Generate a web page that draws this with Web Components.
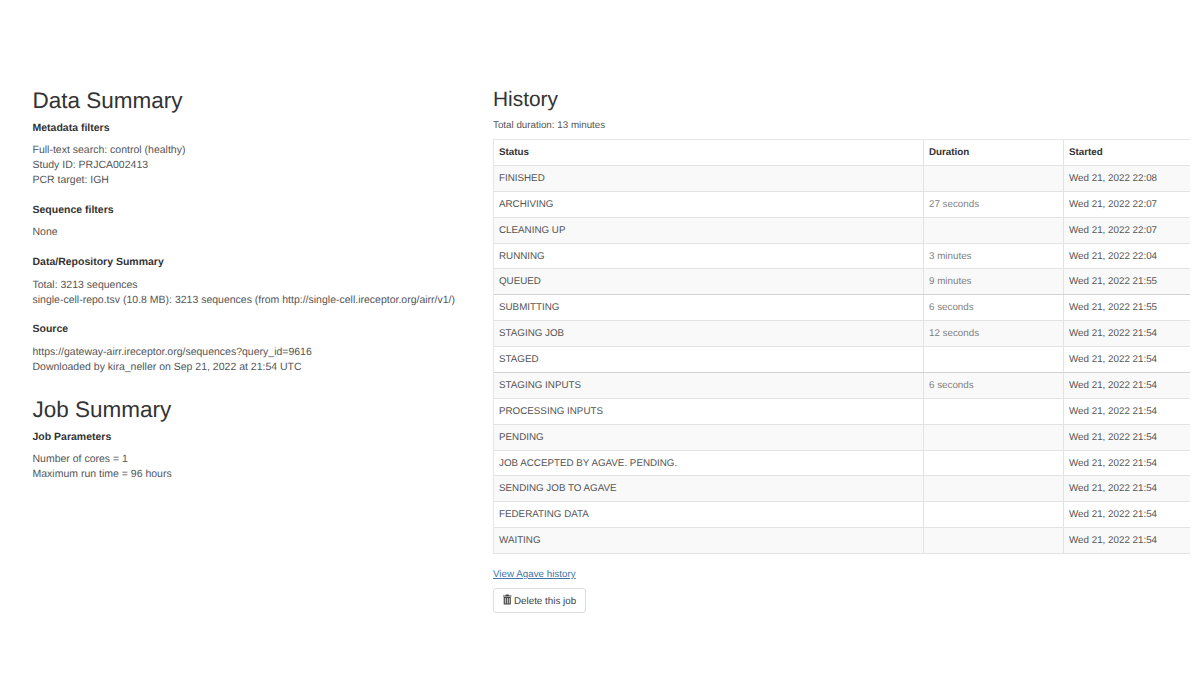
<!DOCTYPE html>
<html>
<head>
<meta charset="utf-8">
<title>Job</title>
<style>
  html, body { margin: 0; background: #fff; overflow: hidden; }
  body { font: 10.5px/15px "Liberation Sans", Arial, sans-serif; color: #555; text-rendering: geometricPrecision; }
</style>
</head>
<body>
<job-page>
  <div slot="left">
    <page-title>Data Summary</page-title>
    <summary-block heading="Metadata filters">Full-text search: control (healthy)<br>Study ID: PRJCA002413<br>PCR target: IGH</summary-block>
    <summary-block heading="Sequence filters">None</summary-block>
    <summary-block class="loose" heading="Data/Repository Summary">Total: 3213 sequences<br>single-cell-repo.tsv (10.8 MB): 3213 sequences (from http://single-cell.ireceptor.org/airr/v1/)</summary-block>
    <summary-block class="loose" heading="Source">https://gateway-airr.ireceptor.org/sequences?query_id=9616<br>Downloaded by kira_neller on Sep 21, 2022 at 21:54 UTC</summary-block>
    <page-title class="second">Job Summary</page-title>
    <summary-block heading="Job Parameters">Number of cores = 1<br>Maximum run time = 96 hours</summary-block>
  </div>
  <div slot="right">
    <page-title class="history">History</page-title>
    <history-table total="Total duration: 13 minutes"></history-table>
    <job-actions></job-actions>
  </div>
</job-page>

<script>
class JobPage extends HTMLElement {
  constructor() {
    super();
    this.attachShadow({mode: "open"}).innerHTML = `
      <style>
        :host { display: grid; grid-template-columns: 460.5px 697px; width: 1200px; height: 675px; box-sizing: border-box; padding: 87px 0 0 32.5px; overflow: hidden; }
      </style>
      <slot name="left"></slot>
      <slot name="right"></slot>`;
  }
}

class PageTitle extends HTMLElement {
  constructor() {
    super();
    this.attachShadow({mode: "open"}).innerHTML = `
      <style>
        :host { display: block; font-size: 22.5px; line-height: 29px; color: #333; margin: -1px 0 6px; }
        :host(.second) { margin-top: 20px; }
        :host(.history) { font-size: 20.9px; line-height: 26px; margin: 0; }
      </style>
      <slot></slot>`;
  }
}

class SummaryBlock extends HTMLElement {
  constructor() {
    super();
    this.attachShadow({mode: "open"}).innerHTML = `
      <style>
        :host { display: block; margin-bottom: 15px; }
        :host(.loose) { margin-bottom: 14px; }
        h4 { margin: 4px 0 7px; font-size: 10.5px; line-height: 15px; font-weight: bold; color: #333; }
        :host(.loose) h4 { margin-bottom: 8px; }
      </style>
      <h4></h4>
      <slot></slot>`;
    this.shadowRoot.querySelector("h4").textContent = this.getAttribute("heading");
  }
}

const HISTORY = [
  ["FINISHED", "", "Wed 21, 2022 22:08"],
  ["ARCHIVING", "27 seconds", "Wed 21, 2022 22:07"],
  ["CLEANING UP", "", "Wed 21, 2022 22:07"],
  ["RUNNING", "3 minutes", "Wed 21, 2022 22:04"],
  ["QUEUED", "9 minutes", "Wed 21, 2022 21:55"],
  ["SUBMITTING", "6 seconds", "Wed 21, 2022 21:55"],
  ["STAGING JOB", "12 seconds", "Wed 21, 2022 21:54"],
  ["STAGED", "", "Wed 21, 2022 21:54"],
  ["STAGING INPUTS", "6 seconds", "Wed 21, 2022 21:54"],
  ["PROCESSING INPUTS", "", "Wed 21, 2022 21:54"],
  ["PENDING", "", "Wed 21, 2022 21:54"],
  ["JOB ACCEPTED BY AGAVE. PENDING.", "", "Wed 21, 2022 21:54"],
  ["SENDING JOB TO AGAVE", "", "Wed 21, 2022 21:54"],
  ["FEDERATING DATA", "", "Wed 21, 2022 21:54"],
  ["WAITING", "", "Wed 21, 2022 21:54"]
];

// durations in lighter grey, and queued/staged rows have the heavier line under them
class HistoryTable extends HTMLElement {
  constructor() {
    super();
    const rows = HISTORY.map((r, i) => `
      <div class="row ${i % 2 == 0 ? "odd" : ""} ${r[0] == "QUEUED" || r[0] == "STAGED" ? "heavy" : ""}">
        <div>${r[0]}</div><div class="dur">${r[1]}</div><div>${r[2]}</div>
      </div>`).join("");
    this.attachShadow({mode: "open"}).innerHTML = `
      <style>
        :host { display: block; font-size: 9.8px; }
        .total { margin: 5px 0 6px; line-height: 15px; }
        .table { border-top: 1px solid #e6e6e6; border-left: 1px solid #e6e6e6; }
        .row { display: grid; grid-template-columns: 430px 140px 127px; height: 25.875px; box-sizing: border-box; border-bottom: 1px solid #e3e3e3; }
        .row > div { padding: 0 5px; line-height: 25px; border-right: 1px solid #e3e3e3; white-space: nowrap; overflow: hidden; }
        .row > div:last-child { border-right: 0; }
        .head { font-weight: bold; color: #333; }
        .odd { background: #f9f9f9; }
        .heavy { border-bottom-color: #d2d2d2; }
        .dur { color: #808080; }
      </style>
      <div class="total"></div>
      <div class="table">
        <div class="row head"><div>Status</div><div>Duration</div><div>Started</div></div>
        ${rows}
      </div>`;
    this.shadowRoot.querySelector(".total").textContent = this.getAttribute("total");
  }
}

class JobActions extends HTMLElement {
  constructor() {
    super();
    this.attachShadow({mode: "open"}).innerHTML = `
      <style>
        :host { display: block; padding-top: 13px; }
        a { display: block; color: #3f74a8; text-decoration: underline; font-size: 9.8px; line-height: 15px; }
        button { display: flex; align-items: center; gap: 2.5px; margin-top: 6px; height: 25px; padding: 1px 9px 0 9px; background: #fff; border: 1px solid #ddd; border-radius: 3px; font: 9.8px "Liberation Sans", Arial, sans-serif; color: #444; text-rendering: geometricPrecision; }
        svg { width: 8.5px; height: 11px; margin-top: -3px; }
      </style>
      <a href="#">View Agave history</a>
      <button>
        <svg viewBox="0 0 10 12" fill="#444"><path d="M3.4 0h3.2l.6 1.2H10v1.2H0V1.2h2.8zM.8 3h8.4v8.2c0 .5-.3.8-.8.8H1.6c-.5 0-.8-.3-.8-.8zm1.4 1.2v6.4h.9V4.2zm2.4 0v6.4h.9V4.2zm2.3 0v6.4h.9V4.2z"/></svg>
        <span>Delete this job</span>
      </button>`;
  }
}

customElements.define("job-page", JobPage);
customElements.define("page-title", PageTitle);
customElements.define("summary-block", SummaryBlock);
customElements.define("history-table", HistoryTable);
customElements.define("job-actions", JobActions);
</script>
</body>
</html>
